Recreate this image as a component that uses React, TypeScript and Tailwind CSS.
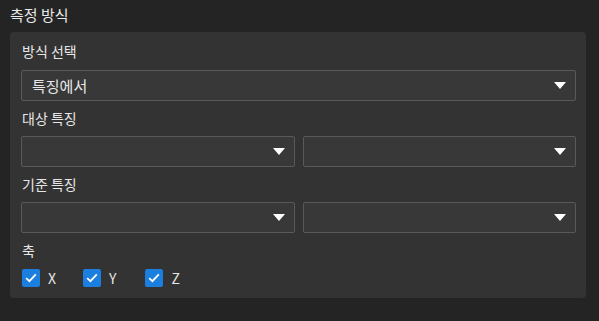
import type { ReactNode } from 'react';

const FONT = { fontFamily: '"Noto Sans CJK KR", "Noto Sans", sans-serif' };

function Caret() {
  return (
    <svg width="12" height="7" viewBox="0 0 12 7" className="shrink-0">
      <path d="M0 0 H12 L6 7 Z" fill="#ffffff" />
    </svg>
  );
}

function Select({ value }: { value?: string }) {
  return (
    <div className="flex-1 h-[31px] bg-[#383838] border border-[#595959] rounded-[2px] flex items-center justify-between pl-[10px] pr-[9px]">
      <span className="text-[15px] text-[#e8e8e8] leading-none">{value ?? ''}</span>
      <Caret />
    </div>
  );
}

function Label({ children, className = '' }: { children: ReactNode; className?: string }) {
  return <div className={`h-[20px] leading-[20px] text-[14px] text-[#e6e6e6] pl-[1px] ${className}`}>{children}</div>;
}

function Check({ label, className = '' }: { label: string; className?: string }) {
  return (
    <div className={`flex items-center ${className}`}>
      <div className="w-[18px] h-[18px] bg-[#1b7fe0] rounded-[2px] flex items-center justify-center">
        <svg width="12" height="10" viewBox="0 0 12 10">
          <path d="M1.2 5.2 L4.4 8.2 L10.8 1.4" fill="none" stroke="#ffffff" strokeWidth="1.8" />
        </svg>
      </div>
      <span className="ml-[8px] text-[14px] text-[#e6e6e6] leading-none">{label}</span>
    </div>
  );
}

export default function App() {
  return (
    <div className="w-[599px] h-[321px] bg-[#242424] overflow-hidden" style={FONT}>
      <div className="h-[32px] pl-[10px] pt-[4px] text-[15px] leading-[22px] text-[#e8e8e8]">측정 방식</div>
      <div className="ml-[10px] w-[576px] bg-[#333333] rounded-[4px] pl-[11px] pr-[10px] pt-[9px] pb-[11px]">
        <Label className="mb-[9px]">방식 선택</Label>
        <div className="flex">
          <Select value="특징에서" />
        </div>
        <Label className="mt-[7px] mb-[8px]">대상 특징</Label>
        <div className="flex gap-[8px]">
          <Select />
          <Select />
        </div>
        <Label className="mt-[7px] mb-[8px]">기준 특징</Label>
        <div className="flex gap-[8px]">
          <Select />
          <Select />
        </div>
        <Label className="mt-[7px] mb-[9px]">축</Label>
        <div className="flex items-center pl-[1px] h-[18px]">
          <Check label="X" />
          <Check label="Y" className="ml-[27px]" />
          <Check label="Z" className="ml-[29px]" />
        </div>
      </div>
    </div>
  );
}
